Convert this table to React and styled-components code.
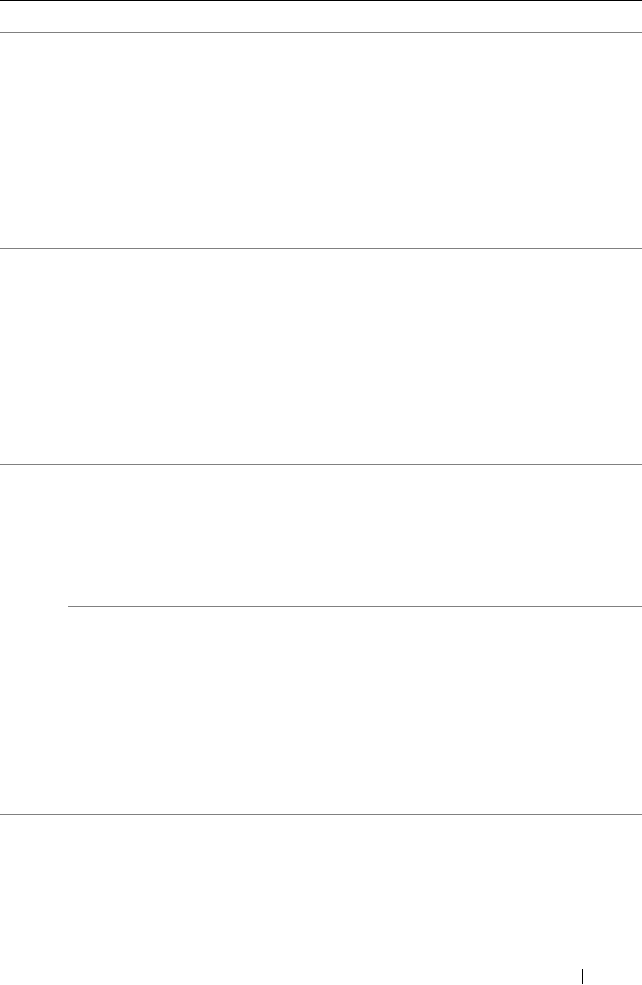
import React from 'react';
import styled, { createGlobalStyle } from 'styled-components';

const GlobalStyle = createGlobalStyle`
  html, body {
    margin: 0;
    padding: 0;
    background: #fff;
  }
  body {
    font-family: "Liberation Serif", serif;
  }
`;

const Page = styled.div`
  width: 642px;
  height: 985px;
  display: flex;
  flex-direction: column;
  overflow: hidden;
`;

const Table = styled.div`
  border-top: 1px solid #000;
  display: flex;
  flex-direction: column;
`;

const HeaderRow = styled.div`
  height: 31px;
`;

const Row = styled.div`
  display: flex;
  border-top: 1px solid #808080;
  height: ${(p) => p.h}px;
`;

const LabelCell = styled.div`
  width: 68px;
  flex-shrink: 0;
`;

const SubRows = styled.div`
  flex: 1;
  display: flex;
  flex-direction: column;
`;

const SubRow = styled.div`
  height: ${(p) => p.h}px;
  border-top: ${(p) => (p.divided ? '1px solid #808080' : 'none')};
`;

const Footer = styled.div`
  margin-top: auto;
  height: 15px;
  display: flex;
  justify-content: flex-end;
  padding-right: 59px;
  padding-bottom: 1px;
`;

const Separator = styled.span`
  width: 1px;
  height: 15px;
  background: #000;
`;

export default function App() {
  return (
    <Page>
      <GlobalStyle />
      <Table>
        <HeaderRow />
        <Row h={215} />
        <Row h={215} />
        <Row h={349}>
          <LabelCell />
          <SubRows>
            <SubRow h={141} />
            <SubRow h={207} divided />
          </SubRows>
        </Row>
        <Row h={120} />
      </Table>
      <Footer>
        <Separator />
      </Footer>
    </Page>
  );
}
